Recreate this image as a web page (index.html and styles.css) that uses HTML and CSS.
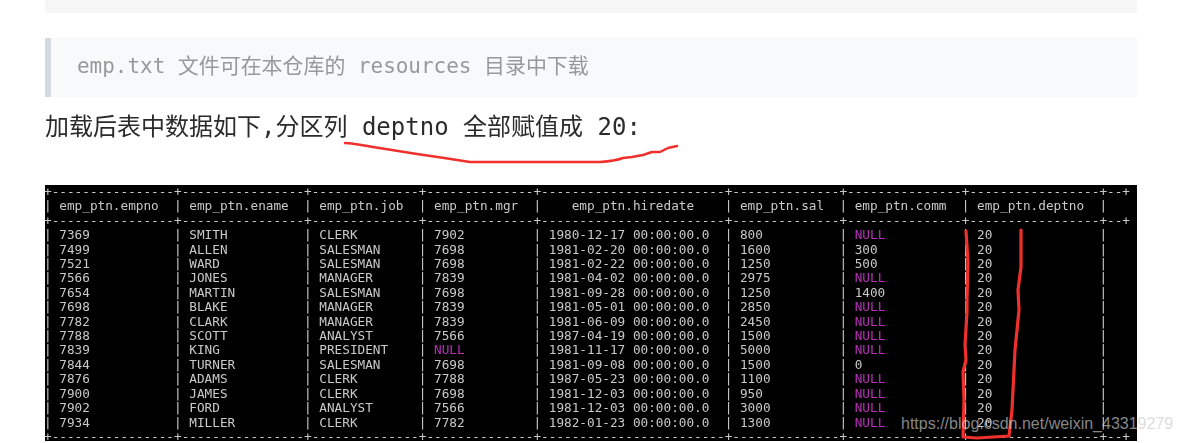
FILE: index.html
```html
<!DOCTYPE html>
<html lang="zh">
<head>
<meta charset="utf-8">
<title>emp_ptn</title>
<link rel="stylesheet" href="styles.css">
</head>
<body>
<main class="page">
<div class="code-tail"></div>
<blockquote class="note">emp.txt 文件可在本仓库的 resources 目录中下载</blockquote>
<p class="lead">加载后表中数据如下,分区列 deptno 全部赋值成 20:</p>
<div class="terminal"><pre class="output">+----------------+----------------+--------------+--------------+------------------------+--------------+---------------+-----------------+--+
| emp_ptn.empno  | emp_ptn.ename  | emp_ptn.job  | emp_ptn.mgr  |    emp_ptn.hiredate    | emp_ptn.sal  | emp_ptn.comm  | emp_ptn.deptno  |
+----------------+----------------+--------------+--------------+------------------------+--------------+---------------+-----------------+--+
| 7369           | SMITH          | CLERK        | 7902         | 1980-12-17 00:00:00.0  | 800          | <span class="null">NULL</span>          | 20              |
| 7499           | ALLEN          | SALESMAN     | 7698         | 1981-02-20 00:00:00.0  | 1600         | 300           | 20              |
| 7521           | WARD           | SALESMAN     | 7698         | 1981-02-22 00:00:00.0  | 1250         | 500           | 20              |
| 7566           | JONES          | MANAGER      | 7839         | 1981-04-02 00:00:00.0  | 2975         | <span class="null">NULL</span>          | 20              |
| 7654           | MARTIN         | SALESMAN     | 7698         | 1981-09-28 00:00:00.0  | 1250         | 1400          | 20              |
| 7698           | BLAKE          | MANAGER      | 7839         | 1981-05-01 00:00:00.0  | 2850         | <span class="null">NULL</span>          | 20              |
| 7782           | CLARK          | MANAGER      | 7839         | 1981-06-09 00:00:00.0  | 2450         | <span class="null">NULL</span>          | 20              |
| 7788           | SCOTT          | ANALYST      | 7566         | 1987-04-19 00:00:00.0  | 1500         | <span class="null">NULL</span>          | 20              |
| 7839           | KING           | PRESIDENT    | <span class="null">NULL</span>         | 1981-11-17 00:00:00.0  | 5000         | <span class="null">NULL</span>          | 20              |
| 7844           | TURNER         | SALESMAN     | 7698         | 1981-09-08 00:00:00.0  | 1500         | 0             | 20              |
| 7876           | ADAMS          | CLERK        | 7788         | 1987-05-23 00:00:00.0  | 1100         | <span class="null">NULL</span>          | 20              |
| 7900           | JAMES          | CLERK        | 7698         | 1981-12-03 00:00:00.0  | 950          | <span class="null">NULL</span>          | 20              |
| 7902           | FORD           | ANALYST      | 7566         | 1981-12-03 00:00:00.0  | 3000         | <span class="null">NULL</span>          | 20              |
| 7934           | MILLER         | CLERK        | 7782         | 1982-01-23 00:00:00.0  | 1300         | <span class="null">NULL</span>          | 20              |
+----------------+----------------+--------------+--------------+------------------------+--------------+---------------+-----------------+--+</pre></div>
<svg class="ink" width="1183" height="443" viewBox="0 0 1183 443" aria-hidden="true">
<path class="stroke-thin" d="M345 143 Q350 143 373 147 L417 154 Q445 158 470 162 L600 162 Q615 161 623 158 L632 157 L643 155 L652 152 L660 152 L668 148 L677 146"/>
<path class="stroke" d="M966 231 L968 262 L967 300 L967 312 L965 345 L966 360 L963 372 L964 400 L963 437 L977 438 L1009 436 L1012 410 L1015 350 L1019 310 L1018 290 L1021 267 L1021 230"/>
</svg>
<span class="watermark">https://blog.csdn.net/weixin_43319279</span>
</main>
</body>
</html>
```
FILE: styles.css
```css
html, body {
  margin: 0;
  padding: 0;
  background: #fff;
}

body {
  height: 443px;
  overflow: hidden;
}

.page {
  position: relative;
  height: 443px;
  padding: 0 46px 0 45px;
  box-sizing: border-box;
  overflow: hidden;
}

.code-tail {
  height: 13px;
  background: #f6f6f6;
  border-radius: 0 0 4px 4px;
}

.note {
  margin: 25px 0 0;
  height: 59px;
  box-sizing: border-box;
  padding-left: 26px;
  background: #f8f9fa;
  border-left: 6px solid #d3d9de;
  color: #999;
  font: 20.95px/57px "DejaVu Sans Mono", "Noto Sans CJK SC", monospace;
  white-space: pre;
  filter: blur(0.3px);
}

.lead {
  margin: 11px 0 0;
  height: 38px;
  color: #2b2b2b;
  font: 24px/38px "DejaVu Sans Mono", "Noto Sans CJK SC", monospace;
  white-space: pre;
  filter: blur(0.3px);
}

.terminal {
  margin-top: 39px;
  width: 1092px;
  height: 256px;
  background: #000;
  overflow: hidden;
}

.output {
  margin: 0 0 0 -1px;
  color: #c9c9c9;
  font: 12.71px/14.4px "DejaVu Sans Mono", monospace;
  filter: blur(0.35px);
}

.null {
  color: #b82fb8;
}

.ink {
  position: absolute;
  top: 0;
  left: 0;
  pointer-events: none;
}

.stroke,
.stroke-thin {
  fill: none;
  stroke: #f0302c;
  stroke-linecap: round;
  stroke-linejoin: round;
}

.stroke {
  stroke-width: 3.2;
}

.stroke-thin {
  stroke-width: 2.5;
}

.watermark {
  position: absolute;
  top: 413px;
  left: 901px;
  color: rgba(204, 204, 204, 0.667);
  font: 16px/22px "Liberation Sans", sans-serif;
  white-space: pre;
}
```
